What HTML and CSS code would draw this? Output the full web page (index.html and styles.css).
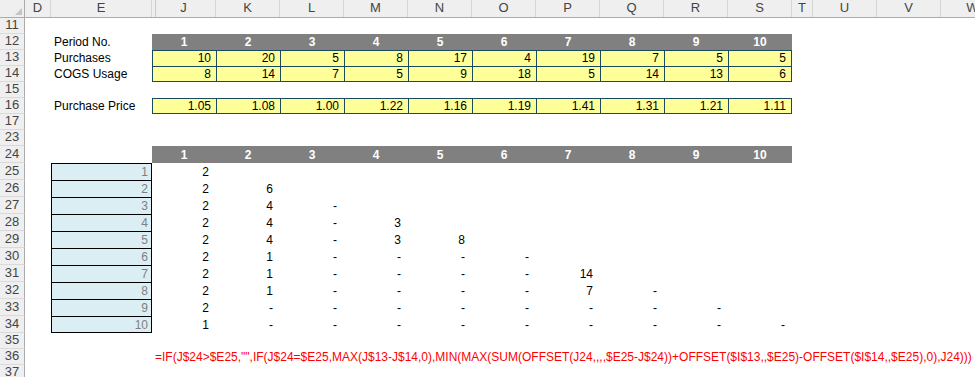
FILE: index.html
```html
<!DOCTYPE html>
<html>
<head>
<meta charset="utf-8">
<link rel="stylesheet" href="styles.css">
</head>
<body>
<div class="sheet">
  <div class="row hdr">
    <div class="corner"><span class="tri"></span></div>
    <div class="ch">D</div>
    <div class="ch">E</div>
    <div class="ch hid">J</div>
    <div class="ch">K</div>
    <div class="ch">L</div>
    <div class="ch">M</div>
    <div class="ch">N</div>
    <div class="ch">O</div>
    <div class="ch">P</div>
    <div class="ch">Q</div>
    <div class="ch">R</div>
    <div class="ch">S</div>
    <div class="ch">T</div>
    <div class="ch">U</div>
    <div class="ch">V</div>
    <div class="ch">W</div>
  </div>

  <div class="row"><div class="rh">11</div></div>

  <div class="row">
    <div class="rh">12</div>
    <div class="lab">Period No.</div>
    <div class="bar">1</div><div class="bar">2</div><div class="bar">3</div><div class="bar">4</div><div class="bar">5</div>
    <div class="bar">6</div><div class="bar">7</div><div class="bar">8</div><div class="bar">9</div><div class="bar">10</div>
  </div>

  <div class="row">
    <div class="rh">13</div>
    <div class="lab">Purchases</div>
    <div class="y">10</div><div class="y">20</div><div class="y">5</div><div class="y">8</div><div class="y">17</div>
    <div class="y">4</div><div class="y">19</div><div class="y">7</div><div class="y">5</div><div class="y end">5</div>
  </div>

  <div class="row">
    <div class="rh">14</div>
    <div class="lab">COGS Usage</div>
    <div class="y b">8</div><div class="y b">14</div><div class="y b">7</div><div class="y b">5</div><div class="y b">9</div>
    <div class="y b">18</div><div class="y b">5</div><div class="y b">14</div><div class="y b">13</div><div class="y b end">6</div>
  </div>

  <div class="row"><div class="rh">15</div></div>

  <div class="row">
    <div class="rh">16</div>
    <div class="lab">Purchase Price</div>
    <div class="y b">1.05</div><div class="y b">1.08</div><div class="y b">1.00</div><div class="y b">1.22</div><div class="y b">1.16</div>
    <div class="y b">1.19</div><div class="y b">1.41</div><div class="y b">1.31</div><div class="y b">1.21</div><div class="y b end">1.11</div>
  </div>

  <div class="row"><div class="rh">17</div></div>
  <div class="row"><div class="rh hidrow">23</div></div>

  <div class="row r17">
    <div class="rh">24</div>
    <div class="bar c4">1</div><div class="bar">2</div><div class="bar">3</div><div class="bar">4</div><div class="bar">5</div>
    <div class="bar">6</div><div class="bar">7</div><div class="bar">8</div><div class="bar">9</div><div class="bar">10</div>
  </div>

  <div class="row r17">
    <div class="rh">25</div><div class="idx">1</div>
    <div class="v">2</div>
  </div>
  <div class="row r17">
    <div class="rh">26</div><div class="idx">2</div>
    <div class="v">2</div><div class="v">6</div>
  </div>
  <div class="row r17">
    <div class="rh">27</div><div class="idx">3</div>
    <div class="v">2</div><div class="v">4</div><div class="v">-</div>
  </div>
  <div class="row r17">
    <div class="rh">28</div><div class="idx">4</div>
    <div class="v">2</div><div class="v">4</div><div class="v">-</div><div class="v">3</div>
  </div>
  <div class="row r17">
    <div class="rh">29</div><div class="idx">5</div>
    <div class="v">2</div><div class="v">4</div><div class="v">-</div><div class="v">3</div><div class="v">8</div>
  </div>
  <div class="row r17">
    <div class="rh">30</div><div class="idx">6</div>
    <div class="v">2</div><div class="v">1</div><div class="v">-</div><div class="v">-</div><div class="v">-</div><div class="v">-</div>
  </div>
  <div class="row r17">
    <div class="rh">31</div><div class="idx">7</div>
    <div class="v">2</div><div class="v">1</div><div class="v">-</div><div class="v">-</div><div class="v">-</div><div class="v">-</div><div class="v">14</div>
  </div>
  <div class="row r17">
    <div class="rh">32</div><div class="idx">8</div>
    <div class="v">2</div><div class="v">1</div><div class="v">-</div><div class="v">-</div><div class="v">-</div><div class="v">-</div><div class="v">7</div><div class="v">-</div>
  </div>
  <div class="row r17">
    <div class="rh">33</div><div class="idx">9</div>
    <div class="v">2</div><div class="v">-</div><div class="v">-</div><div class="v">-</div><div class="v">-</div><div class="v">-</div><div class="v">-</div><div class="v">-</div><div class="v">-</div>
  </div>
  <div class="row r17">
    <div class="rh">34</div><div class="idx last">10</div>
    <div class="v">1</div><div class="v">-</div><div class="v">-</div><div class="v">-</div><div class="v">-</div><div class="v">-</div><div class="v">-</div><div class="v">-</div><div class="v">-</div><div class="v">-</div>
  </div>

  <div class="row"><div class="rh">35</div></div>
  <div class="row">
    <div class="rh">36</div>
    <div class="formula">=IF(J$24&gt;$E25,"",IF(J$24=$E25,MAX(J$13-J$14,0),MIN(MAX(SUM(OFFSET(J24,,,,$E25-J$24))+OFFSET($I$13,,$E25)-OFFSET($I$14,,$E25),0),J24)))</div>
  </div>
  <div class="row"><div class="rh">37</div></div>
</div>
</body>
</html>
```

FILE: styles.css
```css
html, body {
  margin: 0;
  padding: 0;
  background: #ffffff;
  overflow: hidden;
}

body {
  font-family: "Liberation Sans", Arial, sans-serif;
  font-size: 12px;
  color: #000000;
}

.sheet {
  --cols: 25px 26px 101px repeat(10, 64px) 21px 64px 64px 64px;
  width: 1005px;
}

.row {
  display: grid;
  grid-template-columns: var(--cols);
  height: 16px;
}

.row.r17 {
  height: 17px;
}

.row > div {
  box-sizing: border-box;
  display: flex;
  align-items: flex-end;
  line-height: 14px;
  white-space: nowrap;
  min-width: 0;
}

/* column header */
.row.hdr {
  height: 18px;
  background: #efefef;
  border-bottom: 1px solid #ababab;
  box-sizing: border-box;
}

.hdr > div {
  justify-content: center;
  color: #444444;
  font-size: 13px;
  border-right: 1px solid #d6d6d6;
  padding-bottom: 2px;
}

.hdr > .corner {
  border-right: 1px solid #ababab;
  justify-content: flex-end;
  padding: 0 2px 1px 0;
}

.tri {
  display: block;
  width: 0;
  height: 0;
  border-left: 7px solid transparent;
  border-bottom: 7px solid #c4c4c4;
  margin-bottom: 1px;
}

.hdr > .hid {
  background: linear-gradient(to right, transparent 3px, #c9c9c9 3px, #c9c9c9 4px, transparent 4px);
}

/* row header */
.rh {
  grid-column: 1;
  background: #efefef;
  border-right: 1px solid #ababab;
  border-bottom: 1px solid #dadada;
  justify-content: center;
  color: #444444;
  font-size: 13px;
  padding-bottom: 1px;
}

.lab {
  grid-column: 3;
  padding-left: 3px;
  padding-bottom: 1px;
}

.c4 {
  grid-column-start: 4;
}

.bar {
  background: #808080;
  color: #ffffff;
  font-weight: bold;
  justify-content: center;
  padding-bottom: 1px;
}

.lab + .bar {
  grid-column-start: 4;
}

.y {
  background: #ffff99;
  border-left: 1px solid #1a4a5c;
  border-top: 1px solid #1a4a5c;
  justify-content: flex-end;
  padding-right: 5px;
  padding-bottom: 1px;
}

.lab + .y {
  grid-column-start: 4;
}

.y.b {
  border-bottom: 1px solid #1a4a5c;
  padding-bottom: 0;
}

.y.end {
  border-right: 1px solid #1a4a5c;
}

.idx {
  grid-column: 3;
  background: #daeef3;
  border-left: 1px solid #000000;
  border-right: 1px solid #000000;
  border-top: 1px solid #000000;
  justify-content: flex-end;
  padding-right: 3px;
  color: #808080;
  padding-bottom: 1px;
}

.idx.last {
  border-bottom: 1px solid #000000;
  padding-bottom: 0;
}

.v {
  justify-content: flex-end;
  padding-right: 7px;
  padding-bottom: 1px;
}

.formula {
  grid-column: 4 / span 14;
  color: #ff0000;
  padding-left: 3px;
  padding-bottom: 1px;
}
```
